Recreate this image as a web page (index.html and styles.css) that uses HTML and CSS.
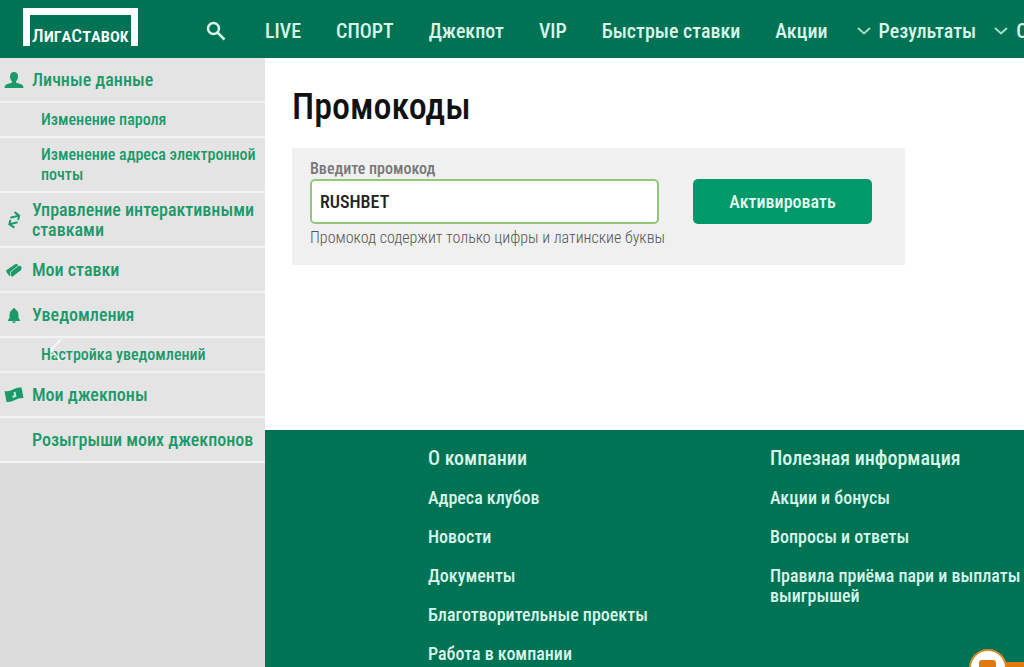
FILE: index.html
```html
<!DOCTYPE html>
<html lang="ru">
<head>
<meta charset="utf-8">
<meta name="viewport" content="width=device-width, initial-scale=1">
<title>Промокоды</title>
<link rel="stylesheet" href="styles.css">
</head>
<body>
<header class="header">
  <a class="logo" href="#"><span class="logo-text">ЛигаСтавок</span></a>
  <button class="search" type="button" aria-label="Поиск">
    <svg viewBox="0 0 20 20" width="20" height="20"><circle cx="7.5" cy="7.5" r="5.5"/><path d="M11.6 11.6 18.5 18.5"/></svg>
  </button>
  <nav class="nav">
    <a href="#">LIVE</a>
    <a href="#">СПОРТ</a>
    <a href="#">Джекпот</a>
    <a href="#">VIP</a>
    <a href="#">Быстрые ставки</a>
    <a href="#">Акции</a>
    <a class="drop" href="#"><svg viewBox="0 0 14 8" width="14" height="8"><path d="M1 1 7 6.5 13 1"/></svg>Результаты</a>
    <a class="drop" href="#"><svg viewBox="0 0 14 8" width="14" height="8"><path d="M1 1 7 6.5 13 1"/></svg>О</a>
  </nav>
</header>
<div class="layout">
  <aside class="sidebar">
    <nav class="menu">
      <a class="item" href="#"><svg class="icon" viewBox="0 0 20 18"><path d="M10 1C7.500 1 6 2.800 6 5.400c0 2.400 1 3.800 2 4.800v1.300c-2.200.9-5.800 1.500-7 3.200-.3.500-.4 1.400-.4 2.300h18.800c0-.9-.1-1.800-.4-2.300-1.200-1.700-4.800-2.300-7-3.200v-1.300c1-1 2-2.400 2-4.800C14 2.800 12.500 1 10 1z"/></svg>Личные данные</a>
      <a class="sub" href="#">Изменение пароля</a>
      <a class="sub" href="#">Изменение адреса электронной почты</a>
      <a class="item" href="#"><svg class="icon line" viewBox="0 0 20 18"><path d="M7 6 16 6M12.500 1.500 16 6 14 10M13 12 4.500 12M6.500 8 4.500 12 8.500 16.500"/></svg>Управление интерактивными ставками</a>
      <a class="item" href="#"><svg class="icon" viewBox="0 0 20 18"><path d="M2 9.500 11.500 3q1.200-.6 2 .4l.5 1.100-7.800 6.300q-.6 1.500.2 4L5.500 15Q2.600 12.500 2 9.500z"/><path d="M6.700 11.300 14.700 4.800q2.100-.2 2.800 1.200.5 1.900-.8 3.200L8 16q-1.700-1.800-1.300-4.700z"/></svg>Мои ставки</a>
      <a class="item" href="#"><svg class="icon" viewBox="0 0 20 18"><path d="M10 2q1.300 0 1.500 1.500Q14.500 5 14.500 9v3l1.500 2v1H4v-1l1.500-2V9q0-4 3-5.500Q8.700 2 10 2zM8.200 15.500h3.600q-.3 1.500-1.800 1.500t-1.800-1.500z"/></svg>Уведомления</a>
      <a class="sub" href="#">Настройка уведомлений<svg class="prev" viewBox="0 0 14 24" width="14" height="24"><path d="M13 1 3 12 13 23"/></svg></a>
      <a class="item" href="#"><svg class="icon" viewBox="0 0 20 18"><path d="M.5 5Q5 6 9 3.500t8.500-2l2 10.500q-4.500-.5-8.500 2t-8.500 2z"/><path class="mark" d="M10.500 6 11.300 10 8.500 11"/></svg>Мои джекпоны</a>
      <a class="item" href="#"><span class="icon"></span>Розыгрыши моих джекпонов</a>
    </nav>
  </aside>
  <div class="page">
    <main class="main">
      <h1 class="title">Промокоды</h1>
      <form class="promo">
        <div class="field">
          <label class="label" for="code">Введите промокод</label>
          <input class="input" id="code" type="text" value="RUSHBET" aria-describedby="hint">
          <p class="hint" id="hint">Промокод содержит только цифры и латинские буквы</p>
        </div>
        <button class="submit" type="button">Активировать</button>
      </form>
    </main>
    <footer class="footer">
      <section class="links">
        <h2>О компании</h2>
        <a href="#">Адреса клубов</a>
        <a href="#">Новости</a>
        <a href="#">Документы</a>
        <a href="#">Благотворительные проекты</a>
        <a href="#">Работа в компании</a>
      </section>
      <section class="links">
        <h2>Полезная информация</h2>
        <a href="#">Акции и бонусы</a>
        <a href="#">Вопросы и ответы</a>
        <a href="#">Правила приёма пари и выплаты выигрышей</a>
      </section>
    </footer>
  </div>
</div>
<button class="chat" type="button" aria-label="Чат"><svg viewBox="0 0 56 44" width="56" height="44"><path class="bar" d="M30 14h26v30H30z"/><circle cx="20" cy="20" r="18"/><rect x="11" y="12" width="17" height="15" rx="3"/></svg></button>
</body>
</html>
```
FILE: styles.css
```css
* { box-sizing: border-box; }
body {
  margin: 0;
  height: 100vh;
  overflow: hidden;
  display: flex;
  flex-direction: column;
  background: #fff;
  color: #111;
  font-family: "Roboto Condensed", Roboto, sans-serif;
  font-weight: 500;
}
a { color: inherit; text-decoration: none; }
button { border: 0; padding: 0; font: inherit; cursor: pointer; }
svg { flex: none; }

.header {
  flex: none;
  height: 58px;
  display: flex;
  align-items: center;
  padding-left: 23px;
  background: #007355;
  color: #d8f5ea;
  overflow: hidden;
}
.logo {
  flex: none;
  width: 115px;
  height: 38px;
  margin-bottom: 4px;
  border: 7px solid #fff;
  border-bottom: 0;
  display: flex;
  align-items: flex-end;
  justify-content: center;
  color: #fff;
}
.logo-text {
  font-size: 19px;
  line-height: 21px;
  font-weight: 500;
  font-variant-caps: small-caps;
}
.search {
  flex: none;
  width: 20px;
  height: 20px;
  margin-left: 68px;
  padding-top: 2px;
  background: none;
}
.search svg {
  display: block;
  fill: none;
  stroke: #d8f5ea;
  stroke-width: 2.5;
}
.nav {
  display: flex;
  gap: 35px;
  margin-left: 39px;
  padding-top: 4px;
  font-size: 20px;
  line-height: 24px;
  white-space: nowrap;
}
.drop {
  display: flex;
  align-items: center;
  gap: 8px;
  margin-left: -6px;
}
.drop + .drop { margin-left: -17px; }
.drop svg { fill: none; stroke: #a5dcc8; stroke-width: 2; }

.layout { flex: 1; min-height: 0; display: flex; }
.sidebar {
  flex: none;
  width: 265px;
  background: #dbdbdb;
  color: #1a9969;
}
.menu { display: flex; flex-direction: column; }
.item, .sub {
  display: flex;
  background: #e4e4e4;
  border-bottom: 2px solid #f4f4f4;
}
.item {
  align-items: center;
  gap: 8px;
  padding: 12px 4px 11px;
  font-size: 18px;
  line-height: 20px;
}
.item:nth-child(4) { padding: 7px 4px 6px; }
.sub {
  position: relative;
  padding: 7px 8px 6px 41px;
  font-size: 16px;
  line-height: 20px;
}
.icon {
  flex: none;
  width: 20px;
  height: 18px;
  fill: #1a9969;
}
.line { fill: none; stroke: #1a9969; stroke-width: 2; }
.line path { transform: rotate(-14deg); transform-origin: center; }
.mark { fill: none; stroke: #c8e4d8; stroke-width: 2; }
.prev {
  position: absolute;
  left: 48px;
  top: 0;
  fill: none;
  stroke: #fff;
  stroke-opacity: 0.7;
  stroke-width: 2;
}

.page { flex: 1; min-width: 0; display: flex; flex-direction: column; }
.main { flex: none; padding: 28px 27px 165px; }
.title {
  margin: 0 0 20px;
  font-size: 36px;
  line-height: 42px;
  font-weight: 500;
}
.promo {
  max-width: 613px;
  display: flex;
  align-items: flex-start;
  gap: 34px;
  padding: 10px 33px 17px 18px;
  background: #f0f0f0;
}
.field { flex: 1; min-width: 0; }
.label {
  display: block;
  color: #777;
  font-size: 16px;
  line-height: 21px;
}
.input {
  display: block;
  width: 100%;
  height: 45px;
  padding: 0 8px;
  border: 2px solid #8fc975;
  border-radius: 5px;
  background: #fff;
  color: #222;
  font: inherit;
  font-size: 18px;
}
.hint {
  margin: 4px 0 0;
  color: #555;
  font-size: 16px;
  line-height: 20px;
  font-weight: 300;
  white-space: nowrap;
}
.submit {
  width: 179px;
  height: 45px;
  margin-top: 21px;
  border-radius: 5px;
  background: #00996a;
  color: #e4fbf2;
  font-size: 18px;
}
.footer {
  flex: 1;
  display: flex;
  gap: 82px;
  padding: 17px 0 0 163px;
  background: #007355;
  color: #d8f5ea;
}
.links {
  flex: none;
  width: 260px;
  display: flex;
  flex-direction: column;
  gap: 19px;
  font-size: 18px;
  line-height: 20px;
}
.links h2 {
  margin: 0;
  font-size: 20px;
  line-height: 22px;
  font-weight: 500;
}
.chat {
  position: absolute;
  right: 0;
  bottom: 0;
  width: 56px;
  height: 19px;
  overflow: hidden;
  background: none;
}
.chat svg { display: block; }
.chat circle { fill: #fff; stroke: #dc8a2c; stroke-width: 2; }
.chat rect, .chat .bar { fill: #e07a10; }
```
